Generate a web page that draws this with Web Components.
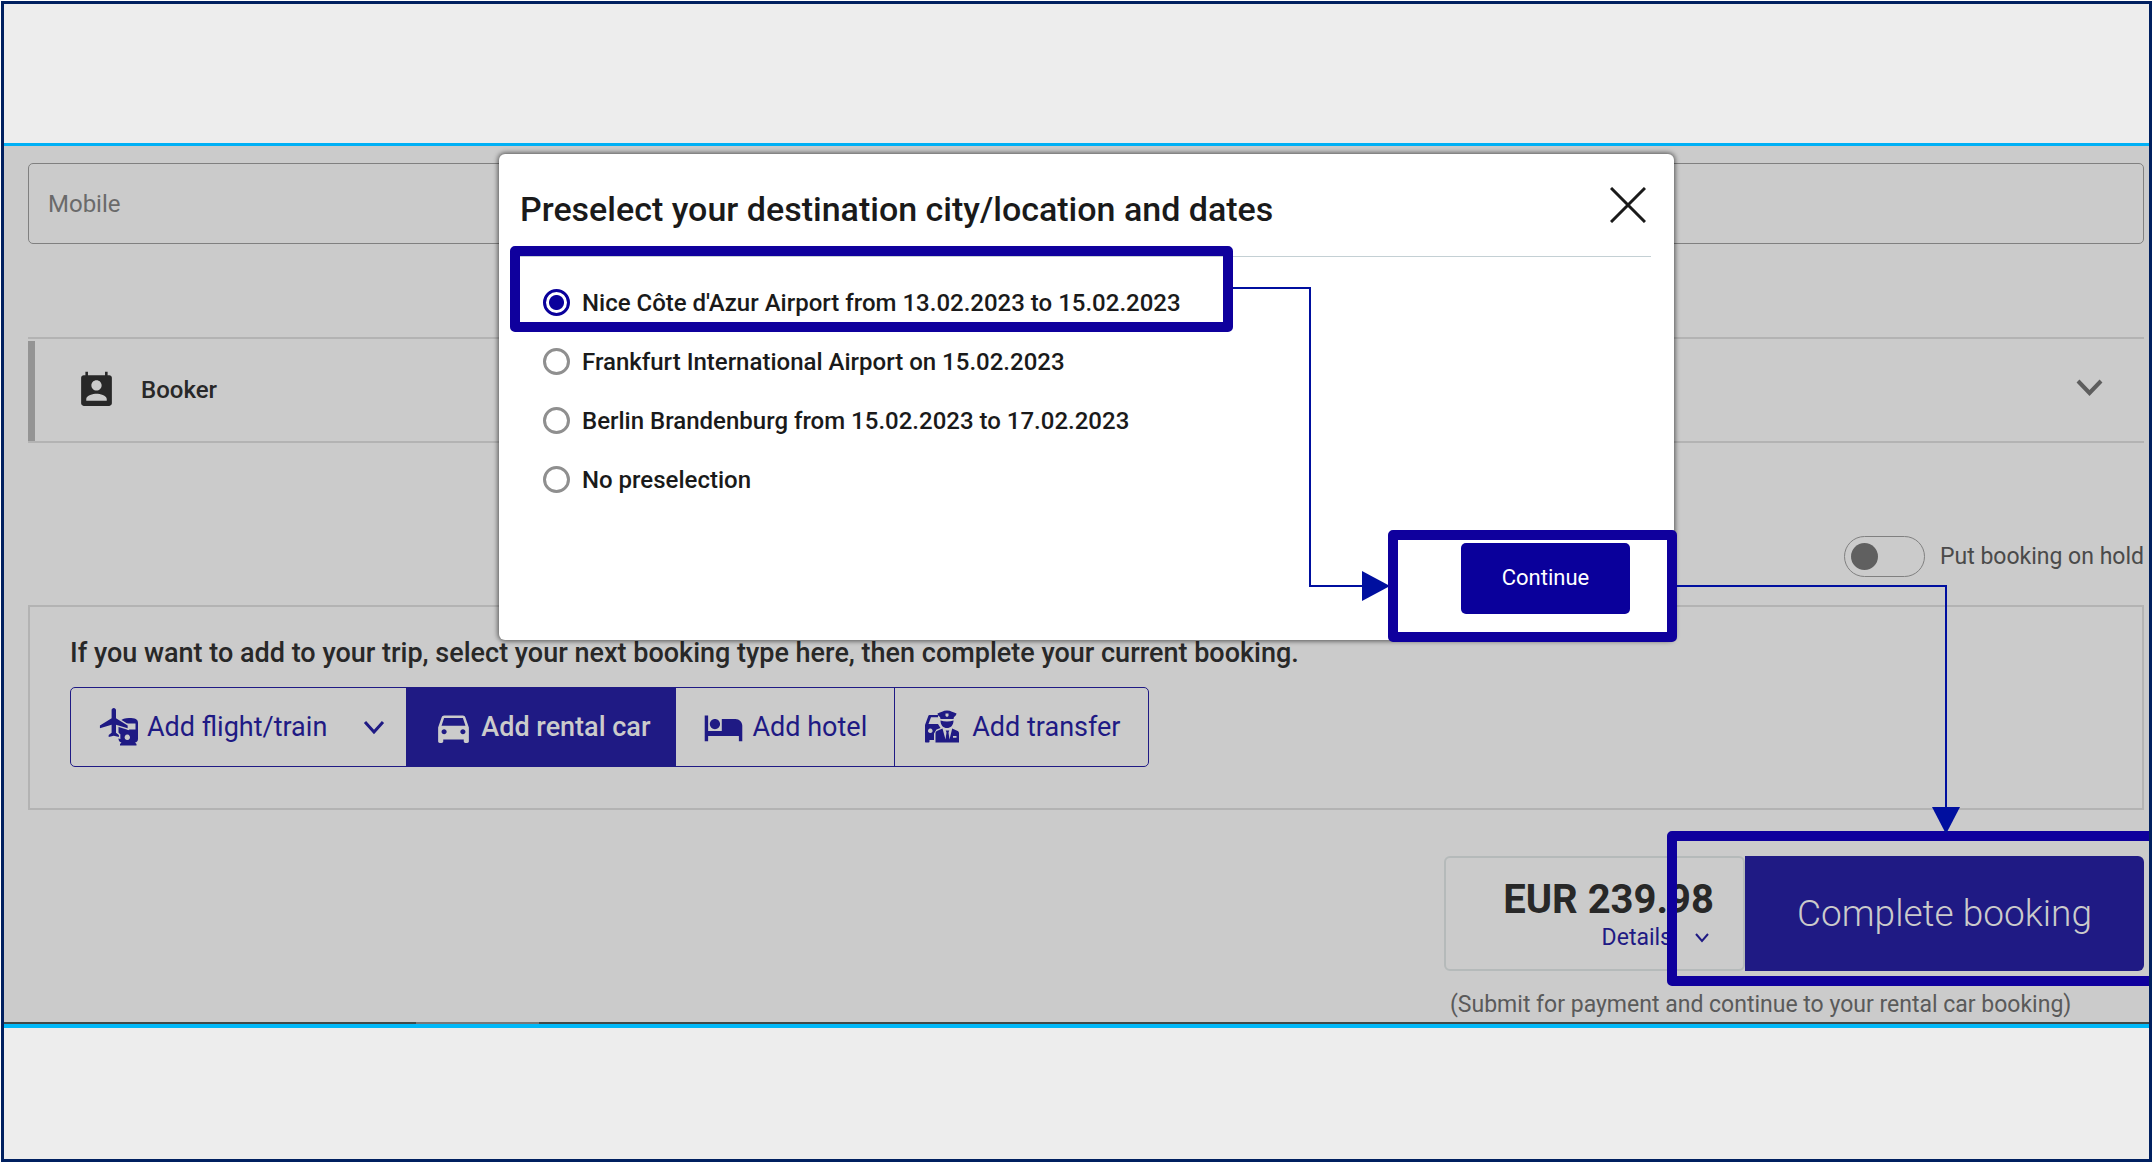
<!DOCTYPE html>
<html lang="en">
<head>
<meta charset="utf-8">
<title>Complete your booking</title>
<style>
  body { margin: 0; font-family: Roboto, "Liberation Sans", sans-serif; background: #fff; }
</style>
</head>
<body>
<booking-frame>
  <booking-page>
    <text-field>Mobile</text-field>
    <person-panel>Booker</person-panel>
    <hold-switch>Put booking on hold</hold-switch>
    <next-booking>If you want to add to your trip, select your next booking type here, then complete your current booking.</next-booking>
    <checkout-bar></checkout-bar>
  </booking-page>
  <preselect-dialog slot="overlay">Preselect your destination city/location and dates</preselect-dialog>
</booking-frame>

<script>
const base = `<style>
  :host { display: block; }
  *, *::before, *::after { box-sizing: border-box; }
  button, input { font: inherit; color: inherit; margin: 0; }
  button { background: none; border: 0; padding: 0; cursor: pointer; }
  svg { display: block; flex: none; }
</style>`;

function define(name, html) {
  customElements.define(name, class extends HTMLElement {
    constructor() {
      super();
      this.attachShadow({ mode: 'open' }).innerHTML = base + html;
    }
  });
}

const icons = {
  contact: `<svg width="41" height="41" viewBox="0 0 24 24" fill="currentColor"><path d="M19 3h-.5V1h-1.500v2H7V1H5.500v2H4.500C3.700 3 3 3.700 3 4.500v15c0 .8.7 1.500 1.500 1.500h15c.8 0 1.500-.7 1.500-1.500v-15C21 3.700 20.300 3 19.500 3zm-7 3c1.660 0 3 1.340 3 3s-1.340 3-3 3-3-1.340-3-3 1.340-3 3-3zm6 12H6v-1c0-2 4-3.100 6-3.100s6 1.100 6 3.100v1z"/></svg>`,
  chevron: (w, h, s) => `<svg width="${w}" height="${h}" viewBox="0 0 ${w} ${h}" fill="none" stroke="currentColor" stroke-width="${s}"><path d="M2 2 L${w / 2} ${h - 3} L${w - 2} 2"/></svg>`,
  flight: `<svg width="40" height="40" viewBox="0 0 40 40" fill="currentColor"><path fill-rule="evenodd" d="M21 14c2-2 5-3 9-3 6 0 9 1 9 5v16c0 2-1.500 3.500-3 3.500l1.500 1.500v1.500H21V37l1.500-1.500c-2-.5-3-2-3-3.500V16zM28 16.500v6h8.500v-6zM28.300 27.600a2.700 2.700 0 1 0 .01 0z"/><g transform="translate(-2 -2) scale(1.46)"><path stroke="#cbcbcb" stroke-width="2" d="M21 16v-2l-8-5V3.500c0-.83-.67-1.500-1.500-1.500S10 2.670 10 3.500V9l-8 5v2l8-2.500V19l-2 1.500V22l3.500-1 3.500 1v-1.500L13 19v-5.500l8 2.500z"/><path d="M21 16v-2l-8-5V3.500c0-.83-.67-1.500-1.500-1.500S10 2.670 10 3.500V9l-8 5v2l8-2.500V19l-2 1.500V22l3.500-1 3.500 1v-1.500L13 19v-5.500l8 2.500z"/></g></svg>`,
  car: `<svg width="41" height="41" viewBox="0 0 24 24" fill="currentColor"><path d="M18.920 6.010C18.720 5.420 18.160 5 17.500 5h-11c-.66 0-1.210.42-1.420 1.010L3 12v8c0 .55.45 1 1 1h1c.55 0 1-.45 1-1v-1h12v1c0 .55.45 1 1 1h1c.55 0 1-.45 1-1v-8l-2.080-5.990zM6.500 16c-.83 0-1.500-.67-1.500-1.500S5.670 13 6.500 13s1.500.67 1.500 1.500S7.330 16 6.500 16zm11 0c-.83 0-1.500-.67-1.500-1.500s.67-1.500 1.500-1.500 1.500.67 1.500 1.500-.67 1.500-1.500 1.500zM5 11l1.500-4.500h11L19 11H5z"/></svg>`,
  hotel: `<svg width="41" height="41" viewBox="0 0 24 24" fill="currentColor"><path d="M7 13c1.660 0 3-1.340 3-3S8.660 7 7 7s-3 1.340-3 3 1.340 3 3 3zm12-6h-8v7H3V5H1v15h2v-3h18v3h2v-9c0-2.210-1.790-4-4-4z"/></svg>`,
  transfer: `<svg width="36" height="36" viewBox="0 0 36 36" fill="currentColor"><path fill-rule="evenodd" d="M5.500 6H14v2.200H7L4.500 15H14l2.500 4-4 1.500-2.500 4V31H5.500v1.500c0 .7-.4 1-1 1H2c-.6 0-1-.3-1-1V16L4.300 7c.2-.6.6-1 1.200-1zM6.300 19.500a2.300 2.300 0 1 0 .01 0z"/><path fill-rule="evenodd" d="M13.500 4.500C17 3.500 19 1.500 23 1.500s6 2 9.500 3c-.3 2-1.500 3-2.500 3.500L29.500 10h-13L16 8c-1.500-.7-2.300-2-2.500-3.500zM21.500 4.500V7L23 8l1.500-1V4.500z"/><path d="M16.500 11.500c4 1.200 9 1.200 13 0 0 5-3 7.500-6.500 7.500s-6.500-2.500-6.500-7.500z"/><path fill-rule="evenodd" d="M18.500 19.500 12.800 22c-1 .6-1.300 1.500-1.300 2.700V33.500h23.500v-8.800c0-1.200-.3-2.100-1.300-2.700l-5.500-2.500-2.700 11-1-7 .8-2h-3.600l.8 2-1 7zM29 27v1.800h3.500V27z"/></svg>`
};

define('booking-frame', `<style>
  :host { display: flex; flex-direction: column; box-sizing: border-box; min-height: calc(100vh - 2px);
    margin: 1px; border: 3px solid #002060; background: #ededed; }
  .top { height: 139px; }
  .stage { position: relative; border-top: 3px solid #00b0f5; border-bottom: 4px solid #00b8f8; overflow: hidden; }
  .edge { display: flex; height: 2px; background: #414a48; }
  .edge i { width: 123px; margin-left: 412px; background: #777; }
  .layer { position: absolute; inset: 8px 0 auto 0; padding-left: 20px; display: flex; justify-content: center; }
  .line { position: absolute; left: calc(50% + 600px); right: 202px; top: 439px; height: 243px;
    border: 2px solid #000f9f; border-left: 0; border-bottom: 0; }
  .line::after { content: ""; position: absolute; right: -15px; bottom: -6px;
    border: 14px solid transparent; border-top: 27px solid #000f9f; border-bottom: 0; }
</style>
<div class="top"></div>
<div class="stage">
  <slot></slot>
  <div class="edge"><i></i></div>
  <div class="layer"><slot name="overlay"></slot></div>
  <div class="line"></div>
</div>`);

define('booking-page', `<style>
  :host { display: flex; flex-direction: column; padding: 17px 5px 3px 24px; background: #cbcbcb; }
</style><slot></slot>`);

define('text-field', `<style>
  .box { display: flex; align-items: center; height: 81px; padding: 0 19px; border: 1px solid #808080; border-radius: 5px; color: #6a6a6a; font-size: 24px; }
  input { flex: 1; min-width: 0; height: 60px; border: 0; background: none; outline: 0; }
</style>
<div class="box"><label for="f"><slot></slot></label><input id="f" type="tel"></div>`);

define('person-panel', `<style>
  :host { margin-top: 93px; }
  .row { display: flex; align-items: center; width: 100%; height: 106px; padding: 0 41px 0 0;
    border: solid #b3b3b3; border-width: 2px 0; color: #282828; font-size: 24px; font-weight: 500; text-align: left; }
  .bar { width: 7px; align-self: stretch; margin: 2px 41px 0 0; background: #949494; }
  .name { flex: 1; margin-left: 24px; }
  .more { color: #5e5e5e; display: flex; padding-bottom: 5px; }
</style>
<button class="row" type="button"><span class="bar"></span>${icons.contact}<span class="name"><slot></slot></span><span class="more">${icons.chevron(27, 17, 4)}</span></button>`);

define('hold-switch', `<style>
  :host { margin-top: 93px; }
  label { display: flex; justify-content: flex-end; align-items: center; gap: 15px; height: 41px; color: #4a4a4a; font-size: 23px; }
  input { appearance: none; width: 81px; height: 41px; padding: 6px; border: 1px solid #808080; border-radius: 21px; display: flex; }
  input::before { content: ""; width: 27px; height: 27px; border-radius: 50%; background: #606060; }
</style>
<label><input type="checkbox" role="switch"><span><slot></slot></span></label>`);

define('next-booking', `<style>
  :host { margin-top: 28px; }
  .box { border: 2px solid #b3b3b3; padding: 31px 40px 41px; }
  p { margin: 0 0 19px; line-height: 30px; font-size: 27px; font-weight: 500; color: #282828; }
  .group { display: inline-flex; height: 80px; border: 1px solid #1f1a84; border-radius: 5px; overflow: hidden; color: #1f1a84; font-size: 27px; vertical-align: top; }
  button { display: flex; align-items: center; gap: 8px; padding: 0 27px; }
  button + button { border-left: 1px solid #1f1a84; }
  .fly { padding: 0 21px 0 28px; }
  .fly svg:last-child { margin-left: 28px; }
  .on { gap: 7px; padding: 0 25px 0 26px; background: #1f1a84; color: #cbcbcb; font-weight: 500; }
  .ride { gap: 12px; padding: 0 27px 0 29px; }
</style>
<div class="box"><p><slot></slot></p>
<div class="group">
  <button class="fly" type="button">${icons.flight}<span>Add flight/train</span>${icons.chevron(22, 15, 3)}</button>
  <button class="on" type="button">${icons.car}<span>Add rental car</span></button>
  <button type="button">${icons.hotel}<span>Add hotel</span></button>
  <button class="ride" type="button">${icons.transfer}<span>Add transfer</span></button>
</div></div>`);

define('checkout-bar', `<style>
  :host { margin-top: 46px; align-self: flex-end; width: 700px; position: relative; }
  .row { display: flex; height: 115px; }
  .price { width: 301px; padding: 18px 29px 0 0; border: 2px solid #b5baba; border-radius: 6px; display: flex; flex-direction: column; align-items: flex-end; color: #282828; }
  strong { font-size: 40px; line-height: 48px; font-weight: 700; }
  .details { display: flex; align-items: center; gap: 22px; padding-right: 4px; line-height: 28px; font-size: 23px; color: #1f1a84; }
  .go { flex: 1; background: #1f1a84; color: #cbcbcb; border-radius: 0 6px 6px 0; font-size: 37px; font-weight: 300; }
  p { margin: 20px 0 0; padding-left: 6px; font-size: 23px; line-height: 28px; color: #5a5a5a; }
  .mark { position: absolute; left: 223px; right: -15px; top: -25px; height: 155px; border: 10px solid #0f009d; border-radius: 5px; pointer-events: none; }
</style>
<div class="row">
  <div class="price"><strong>EUR 239.98</strong><button class="details" type="button"><span>Details</span>${icons.chevron(16, 12, 2)}</button></div>
  <button class="go" type="button">Complete booking</button>
</div>
<p>(Submit for payment and continue to your rental car booking)</p>
<div class="mark"></div>`);

define('preselect-dialog', `<style>
  :host { position: relative; width: 1175px; background: #fff; border-radius: 6px; box-shadow: 0 0 5px 1px rgba(0,0,0,.6); color: #1a1a1a; }
  .in { padding: 0 23px 26px 21px; }
  header { display: flex; align-items: center; justify-content: space-between; height: 103px; border-bottom: 1px solid #c4d0d4; padding-right: 5px; }
  h2 { margin: 0; padding-top: 8px; font-size: 34px; font-weight: 500; }
  fieldset { margin: 16px 0 0; padding: 0 23px; border: 0; }
  label { display: flex; align-items: center; gap: 12px; height: 59px; font-size: 24px; font-weight: 500; }
  input { appearance: none; width: 27px; height: 27px; border: 3px solid #8f8f8f; border-radius: 50%; }
  input:checked { border-color: #0a009b; background: radial-gradient(circle, #0a009b 7px, transparent 8px); }
  footer { display: flex; justify-content: flex-end; padding: 34px 21px 0 0; }
  footer button { width: 169px; height: 71px; padding-bottom: 2px; background: #0a009b; border-radius: 5px; color: #fff; font-size: 22px; font-weight: 400; }
  .mark { position: absolute; border: 10px solid #0f009d; border-radius: 5px; pointer-events: none; }
  .m1 { left: 11px; top: 92px; width: 723px; height: 86px; }
  .m2 { right: -3px; top: 376px; width: 289px; height: 112px; }
  .line { position: absolute; pointer-events: none; }
  .a { left: 733px; top: 133px; width: 79px; height: 300px; border: 2px solid #000f9f; border-width: 2px 2px 0 0; }
  .b { left: 810px; top: 431px; width: 55px; height: 2px; background: #000f9f; }
  .b::after { content: ""; position: absolute; right: -26px; top: -14px; border: 15px solid transparent; border-left: 28px solid #000f9f; border-right: 0; }
</style>
<div class="in">
  <header><h2><slot></slot></h2><button type="button" aria-label="Close"><svg width="36" height="36" viewBox="0 0 36 36" stroke="currentColor" stroke-width="3" fill="none"><path d="M1 1 L35 35 M35 1 L1 35"/></svg></button></header>
  <fieldset>
    <label><input type="radio" name="dest" checked><span>Nice Côte d'Azur Airport from 13.02.2023 to 15.02.2023</span></label>
    <label><input type="radio" name="dest"><span>Frankfurt International Airport on 15.02.2023</span></label>
    <label><input type="radio" name="dest"><span>Berlin Brandenburg from 15.02.2023 to 17.02.2023</span></label>
    <label><input type="radio" name="dest"><span>No preselection</span></label>
  </fieldset>
  <footer><button type="button">Continue</button></footer>
</div>
<div class="line a"></div><div class="line b"></div>
<div class="mark m1"></div><div class="mark m2"></div>`);
</script>
</body>
</html>
